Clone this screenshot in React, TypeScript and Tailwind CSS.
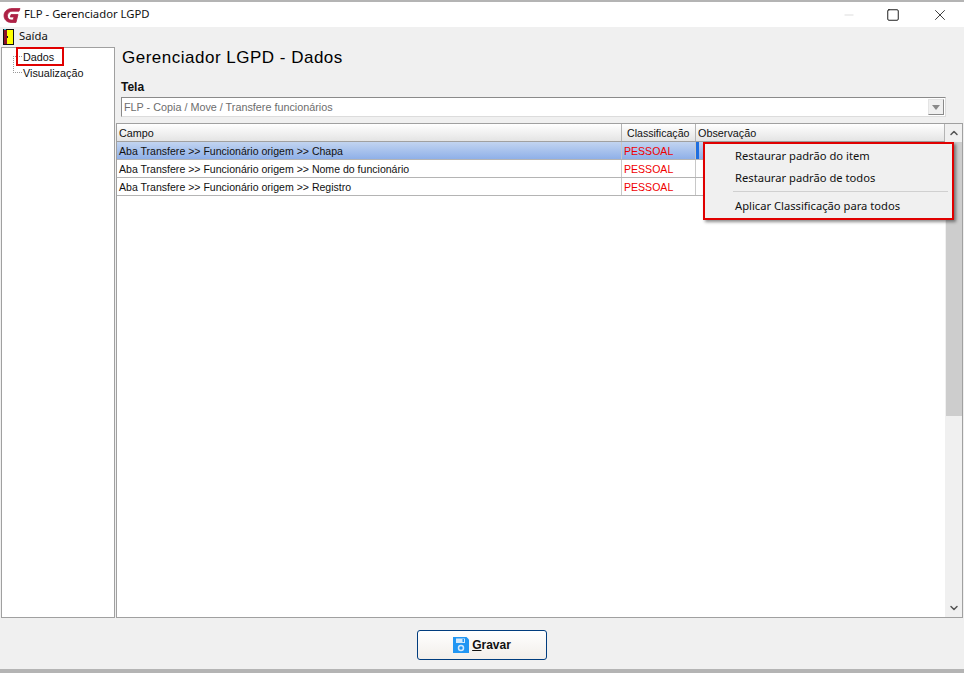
import { ChevronDown, ChevronUp, Minus, Square, X } from "lucide-react";

const rows = [
  { campo: "Aba Transfere >> Funcionário origem >> Chapa", selected: true },
  { campo: "Aba Transfere >> Funcionário origem >> Nome do funcionário", selected: false },
  { campo: "Aba Transfere >> Funcionário origem >> Registro", selected: false },
];

function Logo() {
  return (
    <svg width="18" height="18" viewBox="0 0 18 18" className="shrink-0">
      <path
        d="M17 2.5 L9 2.5 C4.5 2.5 1 5.5 1 9.5 C1 13.5 4 16.5 8 16.5 L13 16.5 L15 8.5 L8 8.5 L7.3 11 L11 11 L10.2 14 L8 14 C5.8 14 4.4 12 4.4 9.8 C4.4 7.2 6.6 5.2 9 5.2 L16 5.2 Z"
        fill="#ad2145"
        stroke="#ad2145"
        strokeWidth="0.8"
        strokeLinejoin="round"
      />
    </svg>
  );
}

function DoorIcon() {
  return (
    <svg width="11" height="16" viewBox="0 0 11 16" className="shrink-0">
      <rect x="0" y="0" width="11" height="16" fill="#111" />
      <rect x="1" y="0" width="2" height="1" fill="#2fb4c8" />
      <rect x="1" y="1" width="3" height="14" fill="#8a1028" />
      <rect x="4" y="1" width="6" height="14" fill="#ffff00" />
      <rect x="4" y="7" width="1" height="2" fill="#111" />
    </svg>
  );
}

function SaveIcon() {
  return (
    <svg width="16" height="16" viewBox="0 0 16 16" className="shrink-0">
      <path d="M0 0 H13.5 L16 2.5 V16 H0 Z" fill="#2196f3" />
      <rect x="3" y="1.5" width="9" height="4.5" fill="#d4e9fb" />
      <rect x="9.5" y="2" width="1.5" height="3" fill="#2196f3" />
      <circle cx="8" cy="11" r="2.5" fill="none" stroke="#d4e9fb" strokeWidth="1.5" />
    </svg>
  );
}

export default function App() {
  return (
    <div className="h-[673px] w-[964px] overflow-hidden bg-[#f0f0f0] font-['Liberation_Sans',sans-serif] text-[10.8px] text-[#111]">
      <div className="h-[2px] bg-[#b4b4b4]" />

      {/* title bar */}
      <div className="flex h-[25px] items-center bg-white pl-[3px]">
        <Logo />
        <span className="ml-[3px] font-['Noto_Sans',sans-serif] text-[11.3px]">FLP - Gerenciador LGPD</span>
        <div className="ml-auto flex items-center">
          <Minus className="mr-[30px] h-[14px] w-[14px] text-[#c4c4c4]" strokeWidth={1} />
          <Square className="mr-[31px] h-[14px] w-[14px] text-black" strokeWidth={1.5} absoluteStrokeWidth />
          <X className="mr-[15px] h-[18px] w-[18px] text-black" strokeWidth={1} absoluteStrokeWidth />
        </div>
      </div>

      {/* menu */}
      <div className="flex h-[20px] items-center pl-[3px]">
        <DoorIcon />
        <span className="mb-[2px] ml-[5px] font-['Noto_Sans',sans-serif] text-[11.3px]">Saída</span>
      </div>

      <div className="flex h-[571px] pl-[1px]">
        {/* tree */}
        <div className="relative w-[114px] border border-[#a0a0a0] bg-white">
          <div className="flex h-[18px] items-center pl-[21px]">Dados</div>
          <div className="mt-[-1px] flex h-[16px] items-center pl-[21px]">Visualização</div>
          <div className="absolute left-[11px] top-[8px] h-[17px] w-[9px] border-b border-l border-dotted border-[#999]" />
          <div className="absolute left-[11px] top-[8px] w-[9px] border-t border-dotted border-[#999]" />
          <div className="absolute left-[14px] top-[-1px] h-[19px] w-[48px] border-2 border-[#e00000]" />
        </div>

        {/* main */}
        <div className="flex min-w-0 flex-1 flex-col pl-[1px] pr-[1px]">
          <div className="pl-[5px] pr-[17px]">
            <h1 className="mt-[1px] h-[30px] pl-[1px] text-[17px] leading-[20px] tracking-[0.5px] text-black">
              Gerenciador LGPD - Dados
            </h1>
            <div className="h-[19px] pt-[2px] text-[12px] font-bold leading-[15px]">Tela</div>
            <div className="flex h-[20px] items-center justify-between border border-[#dcdcdc] border-l-[#8a8a8a] border-t-[#8a8a8a] bg-white pl-[2px] pr-[1px] text-[#6d6d6d]">
              <span>FLP - Copia / Move / Transfere funcionários</span>
              <div className="flex h-[16px] w-[16px] items-center justify-center border border-[#e4e4e4] border-b-[#8a8a8a] border-r-[#8a8a8a] bg-[#f0f0f0]">
                <div className="h-0 w-0 border-x-[4px] border-t-[5px] border-x-transparent border-t-[#8a8a8a]" />
              </div>
            </div>
          </div>

          {/* grid */}
          <div className="relative mt-[6px] flex flex-1 border border-[#a0a0a0] bg-white">
            <div className="min-w-0 flex-1">
              <div className="flex h-[18px] border-b border-[#a0a0a0] bg-gradient-to-b from-white to-[#e4e4e4] leading-[18px]">
                <div className="w-[505px] border-r border-[#b4b4b4] pl-[2px]">Campo</div>
                <div className="w-[74px] border-r border-[#b4b4b4] pl-[5px] text-[10.6px]">Classificação</div>
                <div className="flex-1 border-r border-[#b4b4b4] pl-[2px]">Observação</div>
              </div>
              {rows.map((r) => (
                <div
                  key={r.campo}
                  className={`flex h-[18px] border-b border-[#b4b4b4] text-[10.55px] leading-[18px] ${
                    r.selected ? "bg-gradient-to-b from-[#c2d4f0] to-[#8fb0e8]" : ""
                  }`}
                >
                  <div className="w-[505px] whitespace-nowrap border-r border-[#c8c8c8] pl-[2px]">{r.campo}</div>
                  <div className="w-[74px] border-r border-[#c8c8c8] pl-[2px] text-[#f00000]">PESSOAL</div>
                  <div className="flex-1">
                    {r.selected && <div className="h-full w-[3px] bg-[#1f6fe0]" />}
                  </div>
                </div>
              ))}
            </div>

            {/* scrollbar */}
            <div className="flex w-[17px] flex-col bg-[#f0f0f0] pl-[1px]">
              <div className="flex h-[18px] items-center justify-center">
                <ChevronUp className="h-[12px] w-[12px] text-[#555]" strokeWidth={3} />
              </div>
              <div className="h-[274px] bg-[#cdcdcd]" />
              <div className="mt-auto flex h-[18px] items-center justify-center">
                <ChevronDown className="h-[12px] w-[12px] text-[#555]" strokeWidth={3} />
              </div>
            </div>

            {/* context menu */}
            <div className="absolute left-[586px] top-[18px] h-[78px] w-[251px] border-2 border-[#e00000] bg-[#f0f0f0] pl-[30px] font-['Noto_Sans',sans-serif] text-[11.2px] shadow-[2px_2px_3px_rgba(0,0,0,0.45)]">
              <div className="flex h-[23px] items-center pt-[2px]">Restaurar padrão do item</div>
              <div className="flex h-[22px] items-center">Restaurar padrão de todos</div>
              <div className="my-[2px] ml-[-2px] mr-[4px] h-px bg-[#d0d0d0]" />
              <div className="flex h-[24px] items-center">Aplicar Classificação para todos</div>
            </div>
          </div>
        </div>
      </div>

      {/* footer */}
      <div className="flex h-[51px] items-center justify-center pt-[3px]">
        <button className="flex h-[30px] w-[130px] items-center justify-center gap-[3px] rounded-[3px] border border-[#003c7e] bg-gradient-to-b from-white to-[#f2eeea] text-[12px] font-bold text-[#111]">
          <SaveIcon />
          <span>
            <span className="underline">G</span>ravar
          </span>
        </button>
      </div>
      <div className="h-[4px] bg-[#b4b4b4]" />
    </div>
  );
}
